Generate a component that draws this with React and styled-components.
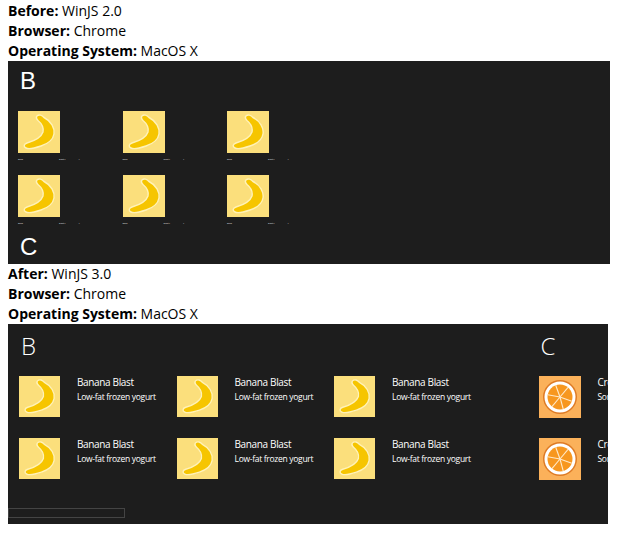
import React from 'react';
import styled, { createGlobalStyle } from 'styled-components';

const GlobalStyle = createGlobalStyle`
    html, body {
        margin: 0;
        background: #fff;
    }
`;

const Page = styled.div`
    padding: 1px 0 0 8px;
    width: 614px;
    box-sizing: border-box;
    font-family: "Open Sans", "Liberation Sans", sans-serif;
    color: #000;
`;

const InfoLine = styled.div`
    font-size: 14px;
    line-height: 20px;
    height: 20px;
    white-space: nowrap;
    b {
        font-weight: 700;
    }
`;

const Panel = styled.div`
    background: #1d1d1d;
    color: #fff;
    width: ${p => p.$width}px;
    height: ${p => p.$height}px;
    overflow: hidden;
    display: flex;
    flex-direction: column;
`;

const OldLetter = styled.div`
    font-size: 24px;
    line-height: 32px;
    height: 32px;
    padding-left: 12px;
    font-family: "Liberation Sans", sans-serif;
    margin: ${p => p.$top}px 0 0;
`;

const OldGrid = styled.div`
    display: grid;
    grid-template-columns: repeat(3, 104.5px);
    grid-auto-rows: 64px;
    padding: 14px 0 0 10px;
`;

const OldItem = styled.div`
    display: flex;
    flex-direction: column;
    gap: 5px;
`;

const Tile = styled.svg`
    width: ${p => p.$size}px;
    height: ${p => p.$size}px;
    display: block;
    flex: none;
`;

const TinyRow = styled.div`
    display: flex;
    height: 3px;
    font-size: 2px;
    line-height: 3px;
    font-weight: 700;
    color: #b4b4b4;
    white-space: nowrap;
`;

const TinyWord = styled.span`
    display: block;
    margin-left: ${p => p.$left}px;
`;

const Sections = styled.div`
    display: flex;
    flex: none;
    height: 155px;
    padding-left: 11px;
    gap: 47px;
`;

const Section = styled.div`
    flex: none;
`;

const NewLetter = styled.div`
    font-size: 24px;
    font-weight: 300;
    line-height: 32px;
    height: 52px;
    padding: 6px 0 0 2px;
    box-sizing: border-box;
`;

const NewGrid = styled.div`
    display: grid;
    grid-template-columns: repeat(${p => p.$cols}, 157.5px);
    grid-auto-rows: 42px;
    row-gap: 20px;
`;

const NewItem = styled.div`
    display: flex;
    gap: 17px;
    align-items: flex-start;
`;

const ItemText = styled.div`
    margin-top: -1px;
    white-space: nowrap;
`;

const ItemTitle = styled.div`
    font-size: 10px;
    line-height: 15px;
    letter-spacing: -0.35px;
`;

const ItemDesc = styled.div`
    font-size: 8.5px;
    line-height: 13px;
    letter-spacing: -0.3px;
`;

const ScrollBar = styled.div`
    width: 117px;
    height: 10px;
    box-sizing: border-box;
    margin-top: 29px;
    border: 1px solid #444;
    flex: none;
`;

function BananaTile({ size = 42 }) {
    return (
        <Tile $size={size} viewBox="0 0 42 42">
            <rect width="42" height="42" fill="#fbdf7c" />
            <path
                d="M19 5C21 3 24 4 26 6.500C33 10 37 17 36 23C35 29 29 33 23 35C17 37 11 38.500 8 37C5 35.500 6 33 9 32C16 30 23 27 25 21C26 16 23 12 20 9.500C18.500 8 18 6 19 5Z"
                fill="#f6c500"
                stroke="#fff2b8"
                strokeWidth="1.4"
            />
        </Tile>
    );
}

function OrangeTile({ size = 42 }) {
    const spokes = [20, 75, 130, 190, 250, 310];
    return (
        <Tile $size={size} viewBox="0 0 42 42">
            <rect width="42" height="42" fill="#fbb15a" />
            <circle cx="21" cy="21" r="17" fill="#de7b25" />
            <circle cx="21" cy="21" r="15.500" fill="#fff" />
            <circle cx="21" cy="21" r="12.500" fill="#f7971f" />
            {spokes.map(a => (
                <line
                    key={a}
                    x1="21"
                    y1="21"
                    x2={21 + 12.5 * Math.cos((a * Math.PI) / 180)}
                    y2={21 + 12.5 * Math.sin((a * Math.PI) / 180)}
                    stroke="#ffe9c9"
                    strokeWidth="1.1"
                />
            ))}
        </Tile>
    );
}

function OldCell() {
    return (
        <OldItem>
            <BananaTile />
            <TinyRow>
                <TinyWord $left={0}>Bana</TinyWord>
                <TinyWord $left={36}>Blast L</TinyWord>
                <TinyWord $left={13}>f</TinyWord>
            </TinyRow>
        </OldItem>
    );
}

function NewCell({ tile, title, desc }) {
    return (
        <NewItem>
            {tile}
            <ItemText>
                <ItemTitle>{title}</ItemTitle>
                <ItemDesc>{desc}</ItemDesc>
            </ItemText>
        </NewItem>
    );
}

function Info({ label, value, os }) {
    return (
        <>
            <InfoLine><b>{label}:</b> {value}</InfoLine>
            <InfoLine><b>Browser:</b> Chrome</InfoLine>
            <InfoLine><b>Operating System:</b> {os}</InfoLine>
        </>
    );
}

export default function App() {
    const six = [0, 1, 2, 3, 4, 5];
    return (
        <Page>
            <GlobalStyle />
            <Info label="Before" value="WinJS 2.0" os="MacOS X" />
            <Panel $width={602} $height={203}>
                <OldLetter $top={4}>B</OldLetter>
                <OldGrid>
                    {six.map(i => <OldCell key={i} />)}
                </OldGrid>
                <OldLetter $top={-8}>C</OldLetter>
            </Panel>
            <Info label="After" value="WinJS 3.0" os="MacOS X" />
            <Panel $width={600} $height={200}>
                <Sections>
                    <Section>
                        <NewLetter>B</NewLetter>
                        <NewGrid $cols={3}>
                            {six.map(i => (
                                <NewCell key={i} tile={<BananaTile size={41} />} title="Banana Blast" desc="Low-fat frozen yogurt" />
                            ))}
                        </NewGrid>
                    </Section>
                    <Section>
                        <NewLetter>C</NewLetter>
                        <NewGrid $cols={1}>
                            <NewCell tile={<OrangeTile />} title="Create" desc="Sorbet" />
                            <NewCell tile={<OrangeTile />} title="Create" desc="Sorbet" />
                        </NewGrid>
                    </Section>
                </Sections>
                <ScrollBar />
            </Panel>
        </Page>
    );
}
